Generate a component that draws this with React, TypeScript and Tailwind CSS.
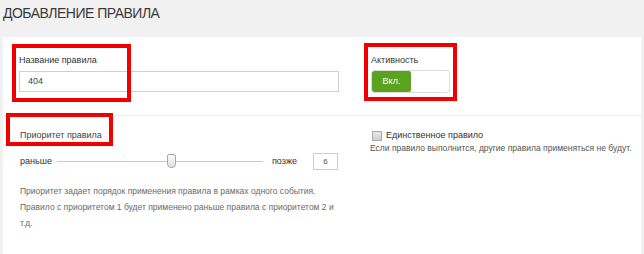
import React from "react";

function RedMark({ className }: { className: string }) {
  return <div className={`absolute border-[4px] border-[#f00000] pointer-events-none ${className}`} />;
}

export default function App() {
  return (
    <div className="relative w-[644px] h-[254px] overflow-hidden bg-[#f1f1f1] font-['Liberation_Sans',Arial,sans-serif] flex flex-col">
      {/* Header */}
      <div className="h-[37px] shrink-0 pl-[3px] pt-[5px] text-[14px] leading-[16px] text-[#3a3a3a] tracking-[-0.5px]">
        ДОБАВЛЕНИЕ ПРАВИЛА
      </div>

      {/* Name + activity */}
      <div className="ml-[3px] w-[638px] h-[78px] shrink-0 bg-white flex pl-[16px] pt-[18px]">
        <div className="w-[320px] flex flex-col">
          <label className="text-[9px] leading-[11px] text-[#333]">Название правила</label>
          <div className="mt-[5px] h-[21px] border border-[#cfcfcf] flex items-center pl-[8px] text-[9px] text-[#444]">
            404
          </div>
        </div>
        <div className="ml-[32px] flex flex-col">
          <label className="text-[9px] leading-[11px] text-[#333]">Активность</label>
          <div className="mt-[4px] w-[79px] h-[23px] rounded-[3px] border border-[#dcdcdc] flex overflow-hidden">
            <div className="w-[39px] h-full bg-[#5ba31e] rounded-[2px] flex items-center justify-center text-[9px] text-white">
              Вкл.
            </div>
          </div>
        </div>
      </div>

      <div className="ml-[3px] w-[638px] h-px shrink-0 bg-[#ececec]" />

      {/* Priority */}
      <div className="ml-[3px] w-[638px] flex-1 bg-white flex pl-[17px] pt-[14px]">
        <div className="w-[320px] flex flex-col">
          <div className="text-[9px] leading-[11px] text-[#444]">Приоритет правила</div>
          <div className="mt-[12px] flex items-center h-[17px]">
            <span className="text-[9px] text-[#333] w-[37px]">раньше</span>
            <div className="relative w-[206px] h-[1px] bg-[#c8c8c8]">
              <div className="absolute left-[110px] top-[-7px] w-[9px] h-[14px] rounded-b-[4px] rounded-t-[2px] border border-[#a8a8a8] bg-gradient-to-b from-[#fbfbfb] to-[#e2e2e2]" />
            </div>
            <span className="ml-[9px] text-[9px] text-[#333] w-[41px]">позже</span>
            <div className="w-[25px] h-[17px] border border-[#cfcfcf] flex items-center justify-center text-[8px] text-[#555]">
              6
            </div>
          </div>
          <p className="mt-[13px] text-[8.5px] leading-[16px] text-[#6a6a6a] w-[320px]">
            Приоритет задает порядок применения правила в рамках одного события. Правило с приоритетом 1 будет применено
            раньше правила с приоритетом 2 и т.д.
          </p>
        </div>
        <div className="ml-[30px] flex flex-col">
          <div className="flex items-center h-[11px] pl-[2px]">
            <div className="w-[10px] h-[10px] border border-[#a9a9a9] bg-gradient-to-b from-[#e9e9e9] to-[#cfcfcf]" />
            <span className="ml-[4px] text-[9px] leading-[11px] text-[#333]">Единственное правило</span>
          </div>
          <div className="mt-[2px] text-[8.5px] leading-[11px] text-[#555]">
            Если правило выполнится, другие правила применяться не будут.
          </div>
        </div>
      </div>

      <RedMark className="left-[12px] top-[44px] w-[119px] h-[58px]" />
      <RedMark className="left-[364px] top-[43px] w-[93px] h-[58px]" />
      <RedMark className="left-[6px] top-[113px] w-[107px] h-[33px]" />
    </div>
  );
}
